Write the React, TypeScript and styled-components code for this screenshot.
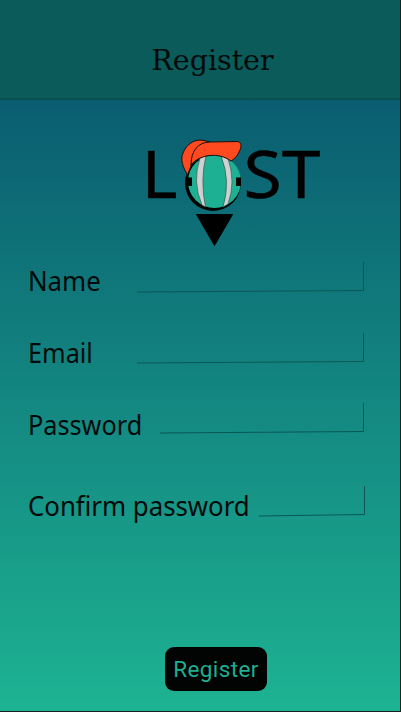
import React from 'react';
import styled, { createGlobalStyle } from 'styled-components';

const GlobalStyle = createGlobalStyle`
  * { box-sizing: border-box; }
  body { margin: 0; background: #17211f; }
`;

const Screen = styled.main`
  width: 401px;
  height: 712px;
  display: flex;
  flex-direction: column;
  border-right: 1px solid #17211f;
  border-bottom: 1px solid #17211f;
  background: linear-gradient(#0a5d70 100px, #1db292 705px);
`;

const Header = styled.header`
  flex: none;
  height: 100px;
  display: flex;
  justify-content: center;
  padding: 42px 0 0 25px;
  background: #0b5b5b;
  border-bottom: 2px solid #0a4f53;
`;

const Title = styled.h1`
  margin: 0;
  font: 400 28.5px/38px 'DejaVu Serif', serif;
  color: #020a0a;
`;

const Logo = styled.svg`
  flex: none;
  display: block;
  overflow: visible;
  width: 190px;
  height: 125px;
  margin: 30px 0 0 140px;
  font-family: 'Noto Sans', sans-serif;
`;

const Letters = styled.text`
  font-size: 65px;
  stroke: #000;
  stroke-width: 0.4px;
`;

const Form = styled.form`
  display: flex;
  flex-direction: column;
  padding: 7px 36px 0 28px;
`;

const Field = styled.label<{ $gap: number }>`
  display: flex;
  align-items: flex-start;
  height: 32px;
  margin-top: ${(p) => p.$gap}px;
`;

const Caption = styled.span<{ $width: number; $stretch: number; $drop: number }>`
  flex: none;
  width: ${(p) => p.$width}px;
  margin-top: ${(p) => p.$drop}px;
  font: 400 27px/38px 'Noto Sans', sans-serif;
  white-space: nowrap;
  color: #020a0a;
  transform: scaleX(${(p) => p.$stretch});
  transform-origin: left;
`;

const Rule = styled.svg`
  flex: none;
  display: block;
  fill: none;
  stroke: #0b5755;
  stroke-width: 1;
`;

const Submit = styled.button`
  width: 102px;
  height: 44px;
  margin: 128.5px 0 0 137px;
  padding: 0;
  border: 0;
  border-radius: 9px;
  background: #020403;
  color: #1eae90;
  font: 400 22.5px/44px Roboto, sans-serif;
  letter-spacing: 0.4px;
`;

const fields = [
  { name: 'Name', gap: 0, width: 109, line: 227, stretch: 0.955, drop: 0 },
  { name: 'Email', gap: 39, width: 109, line: 227, stretch: 0.935, drop: 1 },
  { name: 'Password', gap: 38, width: 132, line: 204, stretch: 0.935, drop: 3 },
  { name: 'Confirm password', gap: 51, width: 231, line: 106, stretch: 0.955, drop: 1 },
];

function LostLogo() {
  return (
    <Logo viewBox="140 130 190 125" role="img" aria-label="LOST">
      <Letters x="141.5" y="197.5" textLength="36" lengthAdjust="spacingAndGlyphs">L</Letters>
      <Letters x="243.5" y="197.5" textLength="77" lengthAdjust="spacingAndGlyphs">ST</Letters>
      <circle cx="213" cy="183" r="28" />
      <circle cx="214.5" cy="181.5" r="26.5" fill="#1eb092" />
      <path d="M200 158Q192 182 202 205L205.5 207Q200 181 206 155.5ZM221 156L228 158.5Q236 182 228 204L223 207Q231 181 221 156Z" fill="#d0d0d0" stroke="#315852" strokeWidth=".7" />
      <path d="M186 177.5h6v8.5h-6zM236 177.5h5v8.5h-5z" />
      <path d="M187.5 175C183 167 180 160 183 153C187 143 196 138.5 204 140.5L210 142C198 143 192 154 191 166Z" fill="#ff491f" stroke="#111" />
      <path d="M191 165C191 151 198 142 210 142L237 141.5C241 141.5 242 146 240 150C238 155 235 159 231 161C219 152 200 154 191 165Z" fill="#ff491f" stroke="#111" />
      <path d="M196.5 214.5H232.5L214.5 245.5Z" stroke="#000" strokeLinejoin="round" />
    </Logo>
  );
}

export default function App() {
  return (
    <>
      <GlobalStyle />
      <Screen>
        <Header>
          <Title>Register</Title>
        </Header>
        <LostLogo />
        <Form>
          {fields.map((f) => (
            <Field key={f.name} $gap={f.gap}>
              <Caption $width={f.width} $stretch={f.stretch} $drop={f.drop}>{f.name}</Caption>
              <Rule width={f.line} height={32}>
                <path d={`M0 30L${f.line - 0.5} 28.5V0`} />
              </Rule>
            </Field>
          ))}
          <Submit type="button">Register</Submit>
        </Form>
      </Screen>
    </>
  );
}
